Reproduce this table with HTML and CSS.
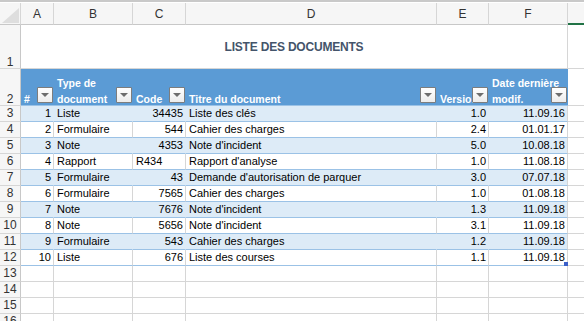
FILE: index.html
```html
<!DOCTYPE html>
<html lang="fr">
<head>
<meta charset="utf-8">
<title>Liste des documents</title>
<link rel="stylesheet" href="styles.css">
</head>
<body>
<div class="topline"></div>
<div class="sheet">
  <div class="row">
    <div class="corner"><span class="tri"></span></div>
    <div class="ch">A</div><div class="ch">B</div><div class="ch">C</div><div class="ch">D</div><div class="ch">E</div><div class="ch">F</div><div class="ch sel"></div>
  </div>
  <div class="row r-title">
    <div class="rh bottom">1</div>
    <div class="title">LISTE DES DOCUMENTS</div>
    <div class="c g"></div>
  </div>
  <div class="row r-head">
    <div class="rh bottom">2</div>
    <div class="hd"><span>#</span><i class="dd"></i></div>
    <div class="hd"><span>Type de<br>document</span><i class="dd"></i></div>
    <div class="hd"><span>Code</span><i class="dd"></i></div>
    <div class="hd"><span>Titre du document</span><i class="dd"></i></div>
    <div class="hd"><span>Version</span><i class="dd"></i></div>
    <div class="hd"><span>Date dernière<br>modif.</span><i class="dd"></i></div>
    <div class="c g"></div>
  </div>
  <div class="row band"><div class="rh">3</div><div class="c t r">1</div><div class="c t">Liste</div><div class="c t r">34435</div><div class="c t">Liste des clés</div><div class="c t r">1.0</div><div class="c t r last">11.09.16</div><div class="c g"></div></div>
  <div class="row"><div class="rh">4</div><div class="c t r">2</div><div class="c t">Formulaire</div><div class="c t r">544</div><div class="c t">Cahier des charges</div><div class="c t r">2.4</div><div class="c t r last">01.01.17</div><div class="c g"></div></div>
  <div class="row band"><div class="rh">5</div><div class="c t r">3</div><div class="c t">Note</div><div class="c t r">4353</div><div class="c t">Note d'incident</div><div class="c t r">5.0</div><div class="c t r last">10.08.18</div><div class="c g"></div></div>
  <div class="row"><div class="rh">6</div><div class="c t r">4</div><div class="c t">Rapport</div><div class="c t">R434</div><div class="c t">Rapport d'analyse</div><div class="c t r">1.0</div><div class="c t r last">11.08.18</div><div class="c g"></div></div>
  <div class="row band"><div class="rh">7</div><div class="c t r">5</div><div class="c t">Formulaire</div><div class="c t r">43</div><div class="c t">Demande d'autorisation de parquer</div><div class="c t r">3.0</div><div class="c t r last">07.07.18</div><div class="c g"></div></div>
  <div class="row"><div class="rh">8</div><div class="c t r">6</div><div class="c t">Formulaire</div><div class="c t r">7565</div><div class="c t">Cahier des charges</div><div class="c t r">1.0</div><div class="c t r last">01.08.18</div><div class="c g"></div></div>
  <div class="row band"><div class="rh">9</div><div class="c t r">7</div><div class="c t">Note</div><div class="c t r">7676</div><div class="c t">Note d'incident</div><div class="c t r">1.3</div><div class="c t r last">11.09.18</div><div class="c g"></div></div>
  <div class="row"><div class="rh">10</div><div class="c t r">8</div><div class="c t">Note</div><div class="c t r">5656</div><div class="c t">Note d'incident</div><div class="c t r">3.1</div><div class="c t r last">11.09.18</div><div class="c g"></div></div>
  <div class="row band"><div class="rh">11</div><div class="c t r">9</div><div class="c t">Formulaire</div><div class="c t r">543</div><div class="c t">Cahier des charges</div><div class="c t r">1.2</div><div class="c t r last">11.09.18</div><div class="c g"></div></div>
  <div class="row"><div class="rh">12</div><div class="c t r">10</div><div class="c t">Liste</div><div class="c t r">676</div><div class="c t">Liste des courses</div><div class="c t r">1.1</div><div class="c t r last end">11.09.18<i class="handle"></i></div><div class="c g"></div></div>
  <div class="row"><div class="rh">13</div><div class="c"></div><div class="c"></div><div class="c"></div><div class="c"></div><div class="c"></div><div class="c"></div><div class="c g"></div></div>
  <div class="row"><div class="rh">14</div><div class="c"></div><div class="c"></div><div class="c"></div><div class="c"></div><div class="c"></div><div class="c"></div><div class="c g"></div></div>
  <div class="row"><div class="rh">15</div><div class="c"></div><div class="c"></div><div class="c"></div><div class="c"></div><div class="c"></div><div class="c"></div><div class="c g"></div></div>
  <div class="row"><div class="rh">16</div><div class="c"></div><div class="c"></div><div class="c"></div><div class="c"></div><div class="c"></div><div class="c"></div><div class="c g"></div></div>
</div>
</body>
</html>
```

FILE: styles.css
```css
* { box-sizing: border-box; }
html, body { margin: 0; padding: 0; background: #fff; overflow: hidden; }
body { width: 584px; height: 321px; font-family: "Liberation Sans", Arial, sans-serif; font-size: 11px; color: #000; }

.topline { height: 3px; border-top: 2px solid #c9c9c9; background: #fff; }

.sheet {
  display: grid;
  grid-template-columns: 21px 33px 79px 53px 251px 52px 79px 1fr;
  grid-template-rows: 22px 44px 37px;
  grid-auto-rows: 16px;
}
.row { display: contents; }

.corner, .ch, .rh { background: #f6f6f6; color: #333; }
.corner { position: relative; border-right: 1px solid #d6d6d6; border-bottom: 1px solid #c8c8c8; overflow: hidden; }
.tri { position: absolute; right: 1px; bottom: 1px; width: 0; height: 0; border-left: 17px solid transparent; border-bottom: 15px solid #dedede; }
.ch { border-right: 1px solid #d6d6d6; border-bottom: 1px solid #c8c8c8; text-align: center; line-height: 22px; font-size: 12px; }
.ch.sel { border-right: none; border-bottom: 2px solid #217346; }

.rh { border-right: 1px solid #c8c8c8; border-bottom: 1px solid #d6d6d6; text-align: center; font-size: 12px; line-height: 15px; }
.rh.bottom { display: flex; align-items: flex-end; justify-content: center; line-height: 12px; padding-bottom: 0; }

.title {
  grid-column: span 6;
  border-bottom: 1px solid #d6d6d6;
  border-right: 1px solid #d6d6d6;
  display: flex; align-items: center; justify-content: center;
  color: #44546a; font-weight: 700; font-size: 12px; letter-spacing: -0.2px;
}

.hd {
  position: relative;
  background: #5b9bd5;
  border-bottom: 1px solid #9bc2e6;
  color: #fff; font-weight: 700; font-size: 10.5px; line-height: 16px;
  display: flex; align-items: flex-end;
  padding: 0 0 0 3px;
  overflow: hidden; white-space: nowrap;
}
.hd > span { margin-bottom: -2px; }
.dd {
  position: absolute; right: 1px; bottom: 2px;
  width: 16px; height: 16px;
  background: linear-gradient(#ffffff, #ececec);
  border: 1px solid #7d7d7d;
  border-radius: 1px;
}
.dd::after {
  content: ""; position: absolute; left: 3px; top: 5px;
  border-left: 4px solid transparent; border-right: 4px solid transparent;
  border-top: 4px solid #6d6d6d;
}

.c { border-right: 1px solid #d6d6d6; border-bottom: 1px solid #d6d6d6; }
.c.g { border-right: none; }
.t {
  border-bottom-color: #9bc2e6;
  line-height: 15px; padding: 0 2px 0 3px;
  white-space: nowrap; overflow: hidden;
}
.r { text-align: right; }
.band .t { background: #ddebf7; border-right-color: #ddebf7; }
.band .t.last { border-right-color: #d6d6d6; }
.end { position: relative; overflow: visible; }
.handle { position: absolute; right: -1px; bottom: -1px; width: 4px; height: 4px; background: #3a5fc8; }
```
